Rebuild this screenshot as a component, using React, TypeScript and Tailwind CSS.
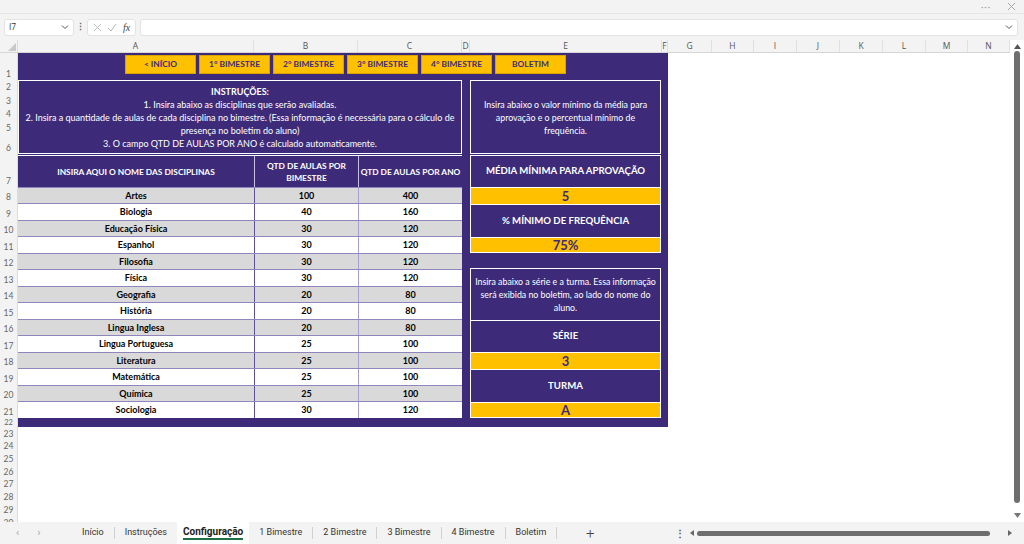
import React from "react";

type Col = { l: string; w: string };

const cols: Col[] = [
  { l: "A", w: "w-[236px]" },
  { l: "B", w: "w-[104px]" },
  { l: "C", w: "w-[104px]" },
  { l: "D", w: "w-[8px]" },
  { l: "E", w: "w-[192px]" },
  { l: "F", w: "w-[6px]" },
  { l: "G", w: "w-[44px]" },
  { l: "H", w: "w-[42px]" },
  { l: "I", w: "w-[43px]" },
  { l: "J", w: "w-[43px]" },
  { l: "K", w: "w-[43px]" },
  { l: "L", w: "w-[43px]" },
  { l: "M", w: "w-[42px]" },
  { l: "N", w: "w-[42px]" },
];

const rows: [string, string][] = [
  ["1", "h-[27px]"],
  ["2", "h-[13px]"],
  ["3", "h-[14px]"],
  ["4", "h-[13px]"],
  ["5", "h-[14px]"],
  ["6", "h-[20px]"],
  ["7", "h-[33px]"],
  ["8", "h-[16px]"],
  ["9", "h-[17px]"],
  ["10", "h-[16px]"],
  ["11", "h-[17px]"],
  ["12", "h-[16px]"],
  ["13", "h-[17px]"],
  ["14", "h-[16px]"],
  ["15", "h-[17px]"],
  ["16", "h-[16px]"],
  ["17", "h-[17px]"],
  ["18", "h-[16px]"],
  ["19", "h-[17px]"],
  ["20", "h-[16px]"],
  ["21", "h-[17px]"],
  ["22", "h-[9px]"],
  ["23", "h-[13px]"],
  ["24", "h-[12px]"],
  ["25", "h-[13px]"],
  ["26", "h-[13px]"],
  ["27", "h-[12px]"],
  ["28", "h-[13px]"],
  ["29", "h-[13px]"],
  ["30", "h-[13px]"],
];

const disciplinas: [string, number, number][] = [
  ["Artes", 100, 400],
  ["Biologia", 40, 160],
  ["Educação Física", 30, 120],
  ["Espanhol", 30, 120],
  ["Filosofia", 30, 120],
  ["Física", 30, 120],
  ["Geografia", 20, 80],
  ["História", 20, 80],
  ["Lingua Inglesa", 20, 80],
  ["Lingua Portuguesa", 25, 100],
  ["Literatura", 25, 100],
  ["Matemática", 25, 100],
  ["Química", 25, 100],
  ["Sociologia", 30, 120],
];

const botoes = ["< INÍCIO", "1° BIMESTRE", "2° BIMESTRE", "3° BIMESTRE", "4° BIMESTRE", "BOLETIM"];

const tabs = ["Início", "Instruções", "Configuração", "1 Bimestre", "2 Bimestre", "3 Bimestre", "4 Bimestre", "Boletim"];

function TopStrip() {
  return (
    <div className="h-[14px] flex items-center justify-end gap-[16px] pr-[8px] border-b border-[#e6e6e6] text-[#9a9a9a]">
      <span className="text-[9px] leading-none tracking-[1px]">···</span>
      <svg width="9" height="9" viewBox="0 0 10 10" stroke="#a0a0a0" strokeWidth="1">
        <path d="M1 1 L9 9 M9 1 L1 9" />
      </svg>
    </div>
  );
}

function FormulaBar() {
  return (
    <div className="h-[26px] flex items-center pl-[4px] pr-[6px] font-['Open_Sans',sans-serif]">
      <div className="w-[70px] h-[17px] bg-white border border-[#e3e3e3] rounded-[3px] flex items-center justify-between pl-[4px] pr-[4px]">
        <span className="text-[8.5px] text-[#333]">I7</span>
        <svg width="8" height="6" viewBox="0 0 8 6" fill="none" stroke="#555" strokeWidth="1">
          <path d="M1 1.5 L4 4.5 L7 1.5" />
        </svg>
      </div>
      <div className="w-[13px] flex justify-center text-[9px] text-[#666] font-bold">⋮</div>
      <div className="w-[49px] h-[17px] bg-white border border-[#e3e3e3] rounded-[3px] flex items-center justify-around px-[2px]">
        <svg width="9" height="9" viewBox="0 0 10 10" stroke="#b5b5b5" strokeWidth="1">
          <path d="M1 1 L9 9 M9 1 L1 9" />
        </svg>
        <svg width="10" height="9" viewBox="0 0 10 9" fill="none" stroke="#b5b5b5" strokeWidth="1">
          <path d="M1 5 L4 8 L9 1" />
        </svg>
        <span className="text-[10px] italic font-['Liberation_Serif',serif] text-[#444]">fx</span>
      </div>
      <div className="ml-[4px] flex-1 h-[17px] bg-white border border-[#e3e3e3] rounded-[3px] flex items-center justify-end pr-[4px]">
        <svg width="8" height="6" viewBox="0 0 8 6" fill="none" stroke="#555" strokeWidth="1">
          <path d="M1 1.5 L4 4.5 L7 1.5" />
        </svg>
      </div>
    </div>
  );
}

function ColHeaders() {
  return (
    <div className="h-[13px] flex bg-[#f3f3f3] border-b border-[#d6d6d6]">
      <div className="w-[18px] h-full flex items-end justify-end pr-[1px] pb-[1px] border-r border-[#dcdcdc]">
        <svg width="8" height="8" viewBox="0 0 8 8">
          <polygon points="8,0 8,8 0,8" fill="#c8c8c8" />
        </svg>
      </div>
      {cols.map((c) => (
        <div
          key={c.l}
          className={`${c.w} shrink-0 h-full flex items-center justify-center border-r border-[#e0e0e0] text-[8.5px] text-[#555] font-['Open_Sans',sans-serif] overflow-visible whitespace-nowrap`}
        >
          {c.l}
        </div>
      ))}
    </div>
  );
}

function RowHeaders() {
  return (
    <div className="w-[18px] shrink-0 bg-[#f3f3f3] border-r border-[#dcdcdc] flex flex-col overflow-hidden">
      {rows.map(([n, h]) =>
        n === "22" ? (
          <div key={n} className={`${h} shrink-0 flex items-center justify-center text-[7.5px] leading-[8px] text-[#666]`}>
            {n}
          </div>
        ) : (
          <div key={n} className={`${h} shrink-0 flex items-end justify-center leading-none text-[8.5px] text-[#666]`}>
            <span className="pb-[2px]">{n}</span>
          </div>
        )
      )}
    </div>
  );
}

function Instrucoes() {
  return (
    <div className="h-[74px] border border-white flex flex-col items-center justify-center text-white text-[9px] leading-[13px] whitespace-nowrap">
      <div className="font-bold">INSTRUÇÕES:</div>
      <div>1. Insira abaixo as disciplinas que serão avaliadas.</div>
      <div>2. Insira a quantidade de aulas de cada disciplina no bimestre. (Essa informação é necessária para o cálculo de</div>
      <div>presença no boletim do aluno)</div>
      <div>3. O campo QTD DE AULAS POR ANO é calculado automaticamente.</div>
    </div>
  );
}

function Tabela() {
  return (
    <div className="mt-px flex flex-col">
      <div className="h-[32px] flex border-t border-white text-white font-bold text-[8.4px] leading-[12px] text-center">
        <div className="w-[236px] flex items-center justify-center">INSIRA AQUI O NOME DAS DISCIPLINAS</div>
        <div className="w-[104px] flex items-center justify-center border-l border-[#c9c2e6]">
          QTD DE AULAS POR
          <br />
          BIMESTRE
        </div>
        <div className="w-[104px] flex items-center justify-center border-l border-[#c9c2e6] whitespace-nowrap">QTD DE AULAS POR ANO</div>
      </div>
      {disciplinas.map(([nome, bim, ano], i) => (
        <div
          key={nome}
          className={`${i % 2 === 0 ? "h-[16px] bg-[#d9d9d9]" : "h-[17px] bg-white"} flex border-t border-[#8f86bd] text-[9px] font-bold text-black`}
        >
          <div className="w-[236px] flex items-center justify-center">{nome}</div>
          <div className="w-[104px] flex items-center justify-center border-l border-[#5e509c]">{bim}</div>
          <div className="w-[104px] flex items-center justify-center border-l border-[#a79fd0]">{ano}</div>
        </div>
      ))}
    </div>
  );
}

function Cabecalho({ texto, h }: { texto: string; h: string }) {
  return (
    <div className={`${h} border-x border-t border-white flex items-center justify-center text-white font-bold text-[9.6px]`}>
      {texto}
    </div>
  );
}

function Valor({ texto, h, last }: { texto: string; h: string; last?: boolean }) {
  return (
    <div
      className={`${h} ${last ? "border-b" : ""} border-x border-t border-white bg-[#ffc000] flex items-center justify-center text-[#3d2b7a] font-bold text-[13px] leading-none`}
    >
      {texto}
    </div>
  );
}

function PainelDireito() {
  return (
    <div className="w-[191px] flex flex-col">
      <div className="h-[74px] border border-white flex flex-col items-center justify-center text-white text-[8.8px] leading-[13px] text-center whitespace-nowrap">
        <div>Insira abaixo o valor mínimo da média para</div>
        <div>aprovação e o percentual mínimo de</div>
        <div>frequência.</div>
      </div>
      <div className="mt-px flex flex-col">
        <Cabecalho texto="MÉDIA MÍNIMA PARA APROVAÇÃO" h="h-[32px]" />
        <Valor texto="5" h="h-[17px]" />
        <Cabecalho texto="% MÍNIMO DE FREQUÊNCIA" h="h-[33px]" />
        <Valor texto="75%" h="h-[16px]" last />
      </div>
      <div className="mt-[15px] flex flex-col">
        <div className="h-[52px] border-x border-t border-white flex flex-col items-center justify-center text-white text-[8.8px] leading-[13px] text-center whitespace-nowrap">
          <div>Insira abaixo a série e a turma. Essa informação</div>
          <div>será exibida no boletim, ao lado do nome do</div>
          <div>aluno.</div>
        </div>
        <Cabecalho texto="SÉRIE" h="h-[32px]" />
        <Valor texto="3" h="h-[17px]" />
        <Cabecalho texto="TURMA" h="h-[33px]" />
        <Valor texto="A" h="h-[16px]" last />
      </div>
    </div>
  );
}

function Planilha() {
  return (
    <div className="w-[650px] h-[374px] bg-[#3d2b7a] flex flex-col">
      <div className="h-[27px] flex gap-[3px] pl-[107px] pt-[2px]">
        {botoes.map((b) => (
          <div
            key={b}
            className="w-[71px] h-[19px] bg-[#ffc000] border border-[#d9a200] flex items-center justify-center text-[8.4px] font-bold text-[#3d2b7a]"
          >
            {b}
          </div>
        ))}
      </div>
      <div className="h-[338px] flex gap-[8px]">
        <div className="w-[444px] flex flex-col">
          <Instrucoes />
          <Tabela />
        </div>
        <PainelDireito />
      </div>
    </div>
  );
}

function VScroll() {
  return (
    <div className="w-[14px] shrink-0 bg-white flex flex-col items-center pt-[4px] pb-[4px]">
      <svg width="7" height="5" viewBox="0 0 7 5">
        <polygon points="3.5,0 7,5 0,5" fill="#555" />
      </svg>
      <div className="mt-[2px] w-[6px] h-[452px] rounded-full bg-[#6e6e6e]" />
      <div className="flex-1" />
      <svg width="7" height="5" viewBox="0 0 7 5">
        <polygon points="0,0 7,0 3.5,5" fill="#777" />
      </svg>
    </div>
  );
}

function TabBar() {
  return (
    <div className="h-[22px] flex items-center bg-[#f3f3f3] font-['Roboto',sans-serif] text-[9px] text-[#333]">
      <div className="w-[72px] flex items-center gap-[18px] pl-[16px] text-[#aaa] text-[11px]">
        <span>‹</span>
        <span>›</span>
      </div>
      {tabs.map((t, i) => {
        const active = t === "Configuração";
        const nextActive = tabs[i + 1] === "Configuração";
        return (
          <React.Fragment key={t}>
            {active ? (
              <div className="h-full bg-white px-[6px] flex flex-col items-center justify-center">
                <span className="font-bold text-[10px] text-[#222] border-b-2 border-[#1e7145] leading-[12px]">{t}</span>
              </div>
            ) : (
              <div className="h-full px-[10px] flex items-center">{t}</div>
            )}
            {!active && !nextActive && <div className="w-px h-[12px] bg-[#d0d0d0]" />}
          </React.Fragment>
        );
      })}
      <div className="w-[66px] flex justify-center text-[15px] font-light text-[#444]">+</div>
      <div className="w-[21px] flex justify-center text-[10px] text-[#555] font-bold ml-[46px]">⋮</div>
      <div className="flex items-center gap-[3px]">
        <svg width="4" height="6" viewBox="0 0 4 6">
          <polygon points="4,0 4,6 0,3" fill="#666" />
        </svg>
        <div className="w-[293px] h-[5px] rounded-full bg-[#6e6e6e]" />
        <div className="w-[12px]" />
        <svg width="4" height="6" viewBox="0 0 4 6">
          <polygon points="0,0 4,3 0,6" fill="#666" />
        </svg>
      </div>
    </div>
  );
}

export default function App() {
  return (
    <div className="w-[1024px] h-[544px] overflow-hidden bg-[#f3f3f3] flex flex-col font-['Lato',sans-serif]">
      <TopStrip />
      <FormulaBar />
      <div className="h-[482px] flex">
        <div className="w-[1010px] flex flex-col bg-white">
          <ColHeaders />
          <div className="flex-1 flex overflow-hidden">
            <RowHeaders />
            <div className="flex-1 bg-white">
              <Planilha />
            </div>
          </div>
        </div>
        <VScroll />
      </div>
      <TabBar />
    </div>
  );
}
